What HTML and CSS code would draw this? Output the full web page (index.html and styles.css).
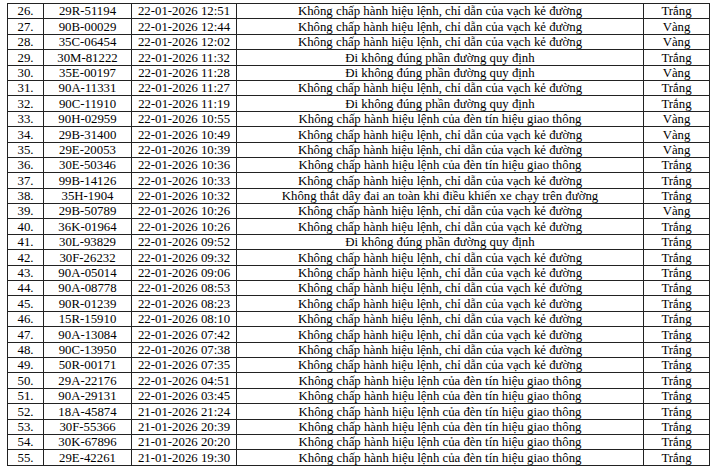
FILE: index.html
```html
<!DOCTYPE html>
<html lang="vi">
<head>
<meta charset="utf-8">
<link rel="stylesheet" href="styles.css">
</head>
<body>
<table class="violations">
<colgroup>
<col class="c-no"><col class="c-plate"><col class="c-time"><col class="c-desc"><col class="c-color">
</colgroup>
<tbody>
<tr><td>26.</td><td>29R-51194</td><td>22-01-2026 12:51</td><td>Không chấp hành hiệu lệnh, chỉ dẫn của vạch kẻ đường</td><td>Trắng</td></tr>
<tr><td>27.</td><td>90B-00029</td><td>22-01-2026 12:44</td><td>Không chấp hành hiệu lệnh, chỉ dẫn của vạch kẻ đường</td><td>Vàng</td></tr>
<tr><td>28.</td><td>35C-06454</td><td>22-01-2026 12:02</td><td>Không chấp hành hiệu lệnh, chỉ dẫn của vạch kẻ đường</td><td>Vàng</td></tr>
<tr><td>29.</td><td>30M-81222</td><td>22-01-2026 11:32</td><td>Đi không đúng phần đường quy định</td><td>Trắng</td></tr>
<tr><td>30.</td><td>35E-00197</td><td>22-01-2026 11:28</td><td>Đi không đúng phần đường quy định</td><td>Vàng</td></tr>
<tr><td>31.</td><td>90A-11331</td><td>22-01-2026 11:27</td><td>Không chấp hành hiệu lệnh, chỉ dẫn của vạch kẻ đường</td><td>Trắng</td></tr>
<tr><td>32.</td><td>90C-11910</td><td>22-01-2026 11:19</td><td>Đi không đúng phần đường quy định</td><td>Trắng</td></tr>
<tr><td>33.</td><td>90H-02959</td><td>22-01-2026 10:55</td><td>Không chấp hành hiệu lệnh của đèn tín hiệu giao thông</td><td>Vàng</td></tr>
<tr><td>34.</td><td>29B-31400</td><td>22-01-2026 10:49</td><td>Không chấp hành hiệu lệnh, chỉ dẫn của vạch kẻ đường</td><td>Vàng</td></tr>
<tr><td>35.</td><td>29E-20053</td><td>22-01-2026 10:39</td><td>Không chấp hành hiệu lệnh, chỉ dẫn của vạch kẻ đường</td><td>Vàng</td></tr>
<tr><td>36.</td><td>30E-50346</td><td>22-01-2026 10:36</td><td>Không chấp hành hiệu lệnh của đèn tín hiệu giao thông</td><td>Trắng</td></tr>
<tr><td>37.</td><td>99B-14126</td><td>22-01-2026 10:33</td><td>Không chấp hành hiệu lệnh, chỉ dẫn của vạch kẻ đường</td><td>Trắng</td></tr>
<tr><td>38.</td><td>35H-1904</td><td>22-01-2026 10:32</td><td>Không thắt dây đai an toàn khi điều khiển xe chạy trên đường</td><td>Trắng</td></tr>
<tr><td>39.</td><td>29B-50789</td><td>22-01-2026 10:26</td><td>Không chấp hành hiệu lệnh, chỉ dẫn của vạch kẻ đường</td><td>Vàng</td></tr>
<tr><td>40.</td><td>36K-01964</td><td>22-01-2026 10:26</td><td>Không chấp hành hiệu lệnh, chỉ dẫn của vạch kẻ đường</td><td>Trắng</td></tr>
<tr><td>41.</td><td>30L-93829</td><td>22-01-2026 09:52</td><td>Đi không đúng phần đường quy định</td><td>Trắng</td></tr>
<tr><td>42.</td><td>30F-26232</td><td>22-01-2026 09:32</td><td>Không chấp hành hiệu lệnh, chỉ dẫn của vạch kẻ đường</td><td>Trắng</td></tr>
<tr><td>43.</td><td>90A-05014</td><td>22-01-2026 09:06</td><td>Không chấp hành hiệu lệnh, chỉ dẫn của vạch kẻ đường</td><td>Trắng</td></tr>
<tr><td>44.</td><td>90A-08778</td><td>22-01-2026 08:53</td><td>Không chấp hành hiệu lệnh, chỉ dẫn của vạch kẻ đường</td><td>Trắng</td></tr>
<tr><td>45.</td><td>90R-01239</td><td>22-01-2026 08:23</td><td>Không chấp hành hiệu lệnh, chỉ dẫn của vạch kẻ đường</td><td>Trắng</td></tr>
<tr><td>46.</td><td>15R-15910</td><td>22-01-2026 08:10</td><td>Không chấp hành hiệu lệnh, chỉ dẫn của vạch kẻ đường</td><td>Trắng</td></tr>
<tr><td>47.</td><td>90A-13084</td><td>22-01-2026 07:42</td><td>Không chấp hành hiệu lệnh, chỉ dẫn của vạch kẻ đường</td><td>Trắng</td></tr>
<tr><td>48.</td><td>90C-13950</td><td>22-01-2026 07:38</td><td>Không chấp hành hiệu lệnh, chỉ dẫn của vạch kẻ đường</td><td>Trắng</td></tr>
<tr><td>49.</td><td>50R-00171</td><td>22-01-2026 07:35</td><td>Không chấp hành hiệu lệnh, chỉ dẫn của vạch kẻ đường</td><td>Trắng</td></tr>
<tr><td>50.</td><td>29A-22176</td><td>22-01-2026 04:51</td><td>Không chấp hành hiệu lệnh của đèn tín hiệu giao thông</td><td>Trắng</td></tr>
<tr><td>51.</td><td>90A-29131</td><td>22-01-2026 03:45</td><td>Không chấp hành hiệu lệnh của đèn tín hiệu giao thông</td><td>Trắng</td></tr>
<tr><td>52.</td><td>18A-45874</td><td>21-01-2026 21:24</td><td>Không chấp hành hiệu lệnh của đèn tín hiệu giao thông</td><td>Trắng</td></tr>
<tr><td>53.</td><td>30F-55366</td><td>21-01-2026 20:39</td><td>Không chấp hành hiệu lệnh của đèn tín hiệu giao thông</td><td>Trắng</td></tr>
<tr><td>54.</td><td>30K-67896</td><td>21-01-2026 20:20</td><td>Không chấp hành hiệu lệnh của đèn tín hiệu giao thông</td><td>Trắng</td></tr>
<tr><td>55.</td><td>29E-42261</td><td>21-01-2026 19:30</td><td>Không chấp hành hiệu lệnh của đèn tín hiệu giao thông</td><td>Trắng</td></tr>
</tbody>
</table>
</body>
</html>
```
FILE: styles.css
```css
html, body {
  margin: 0;
  padding: 0;
  background: #ffffff;
}
body {
  padding: 3px 0 0 7px;
}
.violations {
  border-collapse: collapse;
  table-layout: fixed;
  width: 702px;
  font-family: "Liberation Serif", "Times New Roman", serif;
  font-size: 12.8px;
  color: #000;
}
.c-no { width: 36px; }
.c-plate { width: 88px; }
.c-time { width: 105px; }
.c-desc { width: 407px; }
.c-color { width: 66px; }
.violations td {
  border: 1px solid #222;
  height: 14.4px;
  padding: 0;
  line-height: 14px;
  text-align: center;
  vertical-align: bottom;
  white-space: nowrap;
  overflow: hidden;
}
```
